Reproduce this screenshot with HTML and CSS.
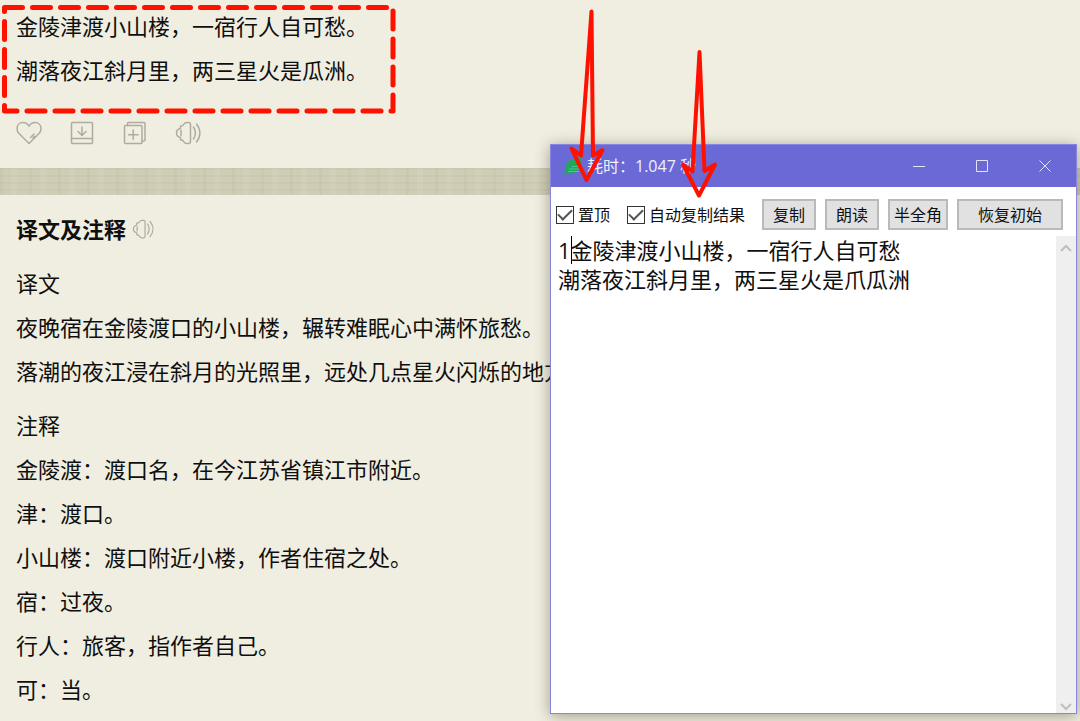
FILE: index.html
```html
<!DOCTYPE html>
<html lang="zh-CN">
<head>
    <meta charset="UTF-8">
    <meta name="viewport" content="width=device-width, initial-scale=1.0">
    <title>耗时：1.047 秒</title>
    <link rel="stylesheet" href="styles.css">
</head>
<body>
    <svg class="symbols" aria-hidden="true">
        <symbol id="icon-sound" viewBox="0 0 26 24">
            <path d="M5.500 5h1C8 5 8.500 4 9 3c.5-1.200 1.500-1.500 3-1.500h1.500c1.500 0 2 .5 2 2v17c0 1.500-.5 2-2 2H12c-1.500 0-2.500-.3-3-1.500-.5-1-1-2-2.500-2h-1v-2.500C3 16 1.500 15 1.500 12s1.500-4 4-4.500zM6 9.500v5M18.500 6c2.500 4 2.500 8 0 12M21.500 3c4.500 5.500 4.500 12.500 0 18"/>
        </symbol>
    </svg>

    <main class="page">
        <section class="poem">
            <div class="poem-text">
                <p>金陵津渡小山楼，一宿行人自可愁。</p>
                <p>潮落夜江斜月里，两三星火是瓜洲。</p>
            </div>
            <div class="actions">
                <button type="button" aria-label="收藏">
                    <svg class="icon" viewBox="0 0 26 24"><path d="M13 22.500 3 12.500C1.500 11 1 9.500 1 7.500 1 4 3.500 1.500 7 1.500c2.500 0 4.500 1.200 6 3.500 1.500-2.300 3.500-3.500 6-3.500 3.500 0 6 2.500 6 6 0 2-.5 3.500-2 5zM14.500 16.500l3.500-3.500M17 16.700l1.500-1.500"/></svg>
                </button>
                <button type="button" aria-label="下载">
                    <svg class="icon" viewBox="0 0 26 24"><rect x="2.500" y="1.500" width="21" height="21" rx="1"/><path d="M2.500 17.500h21M13 6v8M9 10.500l4 4 4-4"/></svg>
                </button>
                <button type="button" aria-label="添加">
                    <svg class="icon" viewBox="0 0 26 24"><rect x="2.500" y="4.500" width="17.500" height="18" rx="1"/><path d="M5.500 4.500v-2q0-1 1-1h15.500q1 0 1 1v16.500q0 1-1 1h-2M11.200 9v9.500M6.500 13.700h9.500"/></svg>
                </button>
                <button type="button" aria-label="朗读原文">
                    <svg class="icon"><use href="#icon-sound"/></svg>
                </button>
            </div>
        </section>

        <div class="divider"></div>

        <section class="notes">
            <div class="notes-title">
                <h2>译文及注释</h2>
                <button type="button" aria-label="朗读译文">
                    <svg class="icon icon-small"><use href="#icon-sound"/></svg>
                </button>
            </div>
            <div class="notes-block">
                <h3>译文</h3>
                <p>夜晚宿在金陵渡口的小山楼，辗转难眠心中满怀旅愁。</p>
                <p>落潮的夜江浸在斜月的光照里，远处几点星火闪烁的地方</p>
            </div>
            <div class="notes-block">
                <h3>注释</h3>
                <p>金陵渡：渡口名，在今江苏省镇江市附近。</p>
                <p>津：渡口。</p>
                <p>小山楼：渡口附近小楼，作者住宿之处。</p>
                <p>宿：过夜。</p>
                <p>行人：旅客，指作者自己。</p>
                <p>可：当。</p>
            </div>
        </section>
    </main>

    <div class="window">
        <header class="titlebar">
            <svg class="leaf" viewBox="0 0 18 18"><path fill="#22a55f" d="M2 14C-1 6 6 1 17 1c1 9-2 16-12 15l-4 2-1-1z"/><path stroke="#43cf83" d="M5 12h12M4 14.500h11M8 9.500h9"/></svg>
            <h1>耗时：1.047 秒</h1>
            <div class="window-controls">
                <button type="button" aria-label="最小化"><svg viewBox="0 0 12 12"><path d="M0 6.500h12"/></svg></button>
                <button type="button" aria-label="最大化"><svg viewBox="0 0 12 12"><path d="M.5.5h11v11H.5z"/></svg></button>
                <button type="button" aria-label="关闭"><svg viewBox="0 0 12 12"><path d="m.5.5 11 11M11.500.5l-11 11"/></svg></button>
            </div>
        </header>
        <div class="toolbar">
            <label><input type="checkbox" checked>置顶</label>
            <label><input type="checkbox" checked>自动复制结果</label>
            <div class="toolbar-buttons">
                <button type="button">复制</button>
                <button type="button">朗读</button>
                <button type="button" class="narrow">半全角</button>
                <button type="button" class="wide">恢复初始</button>
            </div>
        </div>
        <div class="editor">
            <textarea aria-label="识别结果" spellcheck="false">1金陵津渡小山楼，一宿行人自可愁
潮落夜江斜月里，两三星火是爪瓜洲</textarea>
            <span class="caret"></span>
            <div class="scrollbar">
                <svg viewBox="0 0 12 8"><path d="m1 7 5-5 5 5"/></svg>
                <svg viewBox="0 0 12 8"><path d="m1 1 5 5 5-5"/></svg>
            </div>
        </div>
    </div>

    <!-- red marks drawn over the page -->
    <svg class="marks" width="730" height="210" viewBox="0 0 730 210" aria-hidden="true">
        <rect class="selection" x="4.500" y="7.500" width="388.500" height="103.500"/>
        <path d="M591.500 11.500 581 155.500 571.500 148.500 586.500 180 602.500 150 593 155.500z"/>
        <path d="M699.500 52 692.500 171.500 683 164.500 699 195.500 715 164.500 704.500 171z"/>
    </svg>
</body>
</html>
```

FILE: styles.css
```css
* {
    margin: 0;
    padding: 0;
    box-sizing: border-box;
}

body {
    position: relative;
    min-height: 100vh;
    overflow: hidden;
    background: #f0eee1;
    color: #0f0f0f;
    font-family: "Open Sans", "Noto Sans CJK SC", sans-serif;
    font-size: 22px;
    line-height: 44px;
}

button {
    border: none;
    background: none;
    color: inherit;
    font: inherit;
}

svg {
    display: block;
    fill: none;
}

.symbols {
    position: absolute;
    width: 0;
    height: 0;
}

.page {
    height: 100vh;
    overflow: hidden;
    white-space: nowrap;
}

.poem {
    padding: 4px 16px 23px;
}

.actions {
    display: flex;
    gap: 27px;
    padding-top: 29px;
}

.icon {
    width: 26px;
    height: 24px;
    stroke: #aeaca1;
    stroke-width: 1.5;
    stroke-linecap: round;
    stroke-linejoin: round;
}

.icon-small {
    width: 22px;
    height: 20px;
}

/* woven strip between the two cards */
.divider {
    height: 27px;
    background:
        repeating-linear-gradient(90deg, rgba(120, 115, 80, 0.05) 0 3px, transparent 3px 11px, rgba(255, 255, 255, 0.06) 11px 17px, transparent 17px 29px),
        repeating-linear-gradient(rgba(120, 115, 80, 0.05) 0 2px, transparent 2px 7px),
        #d0cdb6;
}

.notes {
    display: flex;
    flex-direction: column;
    gap: 10px;
    padding: 12px 16px;
}

.notes-title {
    display: flex;
    align-items: center;
    gap: 6px;
}

h1,
h2,
h3 {
    font-size: inherit;
    font-weight: 400;
}

.notes-title h2 {
    font-weight: 700;
}

/* floating OCR result window */
.window {
    position: absolute;
    top: 144px;
    right: 3px;
    bottom: 7px;
    left: 550px;
    display: flex;
    flex-direction: column;
    border: 1px solid #8885e0;
    background: #fff;
    box-shadow: 0 2px 14px rgba(60, 60, 30, 0.45);
}

.titlebar {
    display: flex;
    align-items: center;
    height: 42px;
    padding-left: 13px;
    background: #6b69d6;
    color: #f0f0fb;
    font-size: 16px;
    line-height: 24px;
}

.leaf {
    width: 18px;
    height: 18px;
    margin-right: 5px;
}

.window-controls {
    display: flex;
    margin-left: auto;
}

.window-controls button {
    display: flex;
    align-items: center;
    justify-content: center;
    width: 63px;
    height: 42px;
}

.window-controls svg {
    width: 12px;
    height: 12px;
    stroke: #e4e4fa;
}

.toolbar {
    display: flex;
    align-items: center;
    gap: 17px;
    padding: 12px 15px 6px 5px;
    font-size: 16px;
    line-height: 24px;
    white-space: nowrap;
}

.toolbar label {
    display: flex;
    align-items: center;
    gap: 4px;
}

.toolbar input {
    display: grid;
    place-items: center;
    width: 18px;
    height: 18px;
    border: 1px solid #333;
    background: #fff;
    appearance: none;
}

.toolbar input:checked::after {
    content: "";
    width: 12px;
    height: 6px;
    border: solid #555;
    border-width: 0 0 2px 2px;
    transform: translateY(-2px) rotate(-45deg);
}

.toolbar-buttons {
    display: flex;
    flex: 1;
    gap: 9px;
    justify-content: flex-end;
}

.toolbar-buttons button {
    height: 31px;
    padding: 0 9px;
    border: 2px solid #bababa;
    background: #e1e1e1;
}

.toolbar-buttons .narrow {
    padding: 0 4px;
}

.toolbar-buttons .wide {
    padding: 0 19px;
}

.editor {
    position: relative;
    display: flex;
    flex: 1;
}

.editor textarea {
    flex: 1;
    padding: 0 7px;
    border: none;
    outline: none;
    background: #fff;
    color: #0f0f0f;
    font: inherit;
    line-height: 29px;
    resize: none;
}

.caret {
    position: absolute;
    top: 0;
    left: 20px;
    width: 1px;
    height: 28px;
    background: #000;
}

.scrollbar {
    display: flex;
    flex-direction: column;
    align-items: center;
    justify-content: space-between;
    width: 20px;
    padding: 8px 0 2px;
    background: #efefef;
}

.scrollbar svg {
    width: 12px;
    height: 8px;
    stroke: #bfbfbf;
    stroke-width: 2;
}

.marks {
    position: absolute;
    top: 0;
    left: 0;
    pointer-events: none;
    stroke: #ff1100;
    stroke-width: 4;
    stroke-linecap: round;
    stroke-linejoin: round;
}

.marks .selection {
    stroke-width: 5;
    stroke-dasharray: 18 10;
}
```
